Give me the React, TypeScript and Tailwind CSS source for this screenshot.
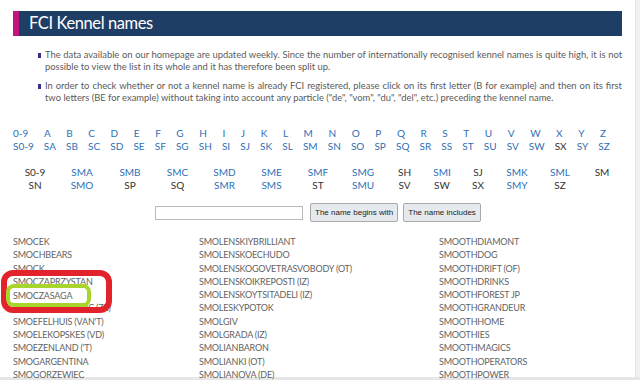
import React from "react";

const letters = ["0-9", "A", "B", "C", "D", "E", "F", "G", "H", "I", "J", "K", "L", "M", "N", "O", "P", "Q", "R", "S", "T", "U", "V", "W", "X", "Y", "Z"];

const sLetters: { t: string; link: boolean }[] = [
  "S0-9", "SA", "SB", "SC", "SD", "SE", "SF", "SG", "SH", "SI", "SJ", "SK", "SL", "SM", "SN", "SO", "SP", "SQ", "SR", "SS", "ST", "SU", "SV", "SW", "SX", "SY", "SZ",
].map((t) => ({ t, link: t !== "SX" }));

const subRow1 = [
  { t: "S0-9", link: false }, { t: "SMA", link: true }, { t: "SMB", link: true }, { t: "SMC", link: true },
  { t: "SMD", link: true }, { t: "SME", link: true }, { t: "SMF", link: true }, { t: "SMG", link: true },
  { t: "SH", link: false }, { t: "SMI", link: true }, { t: "SJ", link: false }, { t: "SMK", link: true },
  { t: "SML", link: true }, { t: "SM", link: false },
];

const subRow2 = [
  { t: "SN", link: false }, { t: "SMO", link: true }, { t: "SP", link: false }, { t: "SQ", link: false },
  { t: "SMR", link: true }, { t: "SMS", link: true }, { t: "ST", link: false }, { t: "SMU", link: true },
  { t: "SV", link: false }, { t: "SW", link: false }, { t: "SX", link: false }, { t: "SMY", link: true },
  { t: "SZ", link: false }, { t: "", link: false },
];

const col1 = ["SMOCEK", "SMOCHBEARS", "SMOCK", "SMOCZAPRZYSTAN", "SMOCZASAGA", "SMOCZEGOSLAWIC (ZE)", "SMOEFELHUIS (VAN'T)", "SMOELEKOPSKES (VD)", "SMOEZENLAND ('T)", "SMOGARGENTINA", "SMOGORZEWIEC"];
const col2 = ["SMOLENSKIYBRILLIANT", "SMOLENSKOECHUDO", "SMOLENSKOGOVETRASVOBODY (OT)", "SMOLENSKOIKREPOSTI (IZ)", "SMOLENSKOYTSITADELI (IZ)", "SMOLESKYPOTOK", "SMOLGIV", "SMOLGRADA (IZ)", "SMOLIANBARON", "SMOLIANKI (OT)", "SMOLIANOVA (DE)"];
const col3 = ["SMOOTHDIAMONT", "SMOOTHDOG", "SMOOTHDRIFT (OF)", "SMOOTHDRINKS", "SMOOTHFOREST JP", "SMOOTHGRANDEUR", "SMOOTHHOME", "SMOOTHIES", "SMOOTHMAGICS", "SMOOTHOPERATORS", "SMOOTHPOWER"];

function Bullet({ lines }: { lines: string[] }) {
  return (
    <div className="flex items-start">
      <span className="mt-[4px] mr-[4px] w-[3px] h-[5px] bg-[#3b2d8c] shrink-0" />
      <div className="flex-1">
        {lines.map((l, i) => (
          <div
            key={i}
            className={`leading-[12px] whitespace-nowrap ${i < lines.length - 1 ? "text-justify [text-align-last:justify]" : ""}`}
          >
            {l}
          </div>
        ))}
      </div>
    </div>
  );
}

export default function App() {
  return (
    <div className="relative w-[640px] h-[380px] overflow-hidden bg-white font-['Lato',sans-serif]">
      <div className="flex h-[377px]">
        <main className="w-[635px] px-[13px] pt-[11px]">
          {/* Title bar */}
          <div className="flex h-[25px]">
            <div className="w-[6px] bg-[#c1177c]" />
            <div className="flex-1 bg-[#1f3e66] pl-[10px] text-white text-[16.5px] tracking-[-0.4px] leading-[25px]">
              FCI Kennel names
            </div>
          </div>

          {/* Intro */}
          <div className="mt-[13px] pl-[25px] text-[9.4px] text-[#5b5b5b] flex flex-col gap-[7px]">
            <Bullet
              lines={[
                "The data available on our homepage are updated weekly. Since the number of internationally recognised kennel names is quite high, it is not",
                "possible to view the list in its whole and it has therefore been split up.",
              ]}
            />
            <Bullet
              lines={[
                "In order to check whether or not a kennel name is already FCI registered, please click on its first letter (B for example) and then on its first",
                "two letters (BE for example) without taking into account any particle (\"de\", \"vom\", \"du\", \"del\", etc.) preceding the kennel name.",
              ]}
            />
          </div>

          {/* Letters */}
          <div className="mt-[23px] text-[10px] text-[#2f6fb5]">
            <div className="flex justify-between w-[593px] leading-[13px]">
              {letters.map((l) => (
                <span key={l}>{l}</span>
              ))}
            </div>
            <div className="flex justify-between w-[597px] leading-[13px]">
              {sLetters.map((l) => (
                <span key={l.t} className={l.link ? "" : "text-[#333]"}>{l.t}</span>
              ))}
            </div>
          </div>

          {/* Second-level letters */}
          <div className="mt-[13px] -ml-[1px] text-[10px] leading-[13px]">
            {[subRow1, subRow2].map((row, r) => (
              <div key={r} className="grid grid-cols-[46px_48px_48px_47px_47px_47px_46px_44px_39px_36px_36px_42px_44px_40px]">
                {row.map((c, i) => (
                  <span key={i} className={`text-center ${c.link ? "text-[#2f6fb5]" : "text-[#333]"}`}>
                    {c.t}
                  </span>
                ))}
              </div>
            ))}
          </div>

          {/* Search */}
          <div className="mt-[11px] flex items-center pl-[142px] font-['Liberation_Sans',sans-serif] text-[8px] text-[#222]">
            <div className="w-[148px] h-[14px] border border-[#b9b9b9] bg-white" />
            <button className="ml-[7px] h-[19px] px-[4px] rounded-[2px] border border-[#a9a9a9] bg-[#e6eaee]">
              The name begins with
            </button>
            <button className="ml-[5px] h-[19px] px-[4px] rounded-[2px] border border-[#a9a9a9] bg-[#e6eaee]">
              The name includes
            </button>
          </div>

          {/* Kennel names */}
          <div className="mt-[13px] flex text-[9px] tracking-[-0.2px] leading-[13.3px] text-[#636363]">
            <div className="w-[186px]">
              {col1.map((n) => (
                <div key={n} className="whitespace-nowrap">{n}</div>
              ))}
            </div>
            <div className="w-[240px]">
              {col2.map((n) => (
                <div key={n} className="whitespace-nowrap">{n}</div>
              ))}
            </div>
            <div>
              {col3.map((n) => (
                <div key={n} className="whitespace-nowrap">{n}</div>
              ))}
            </div>
          </div>
        </main>
        <div className="flex-1 bg-[#f2f2f2] border-l border-[#e4e4e4]" />
      </div>
      <div className="h-[3px] bg-[#e6e6e6]" />

      {/* Annotation marks */}
      <div className="absolute left-[1px] top-[270px] w-[111px] h-[43px] border-[6px] border-[#e2232b] rounded-[12px]" />
      <div className="absolute left-[6px] top-[284px] w-[85px] h-[23px] border-[4px] border-[#a7d52c] rounded-[8px] bg-white">
        <span className="block pl-[3px] text-[9px] tracking-[-0.2px] leading-[15px] text-[#636363]">SMOCZASAGA</span>
      </div>
    </div>
  );
}
